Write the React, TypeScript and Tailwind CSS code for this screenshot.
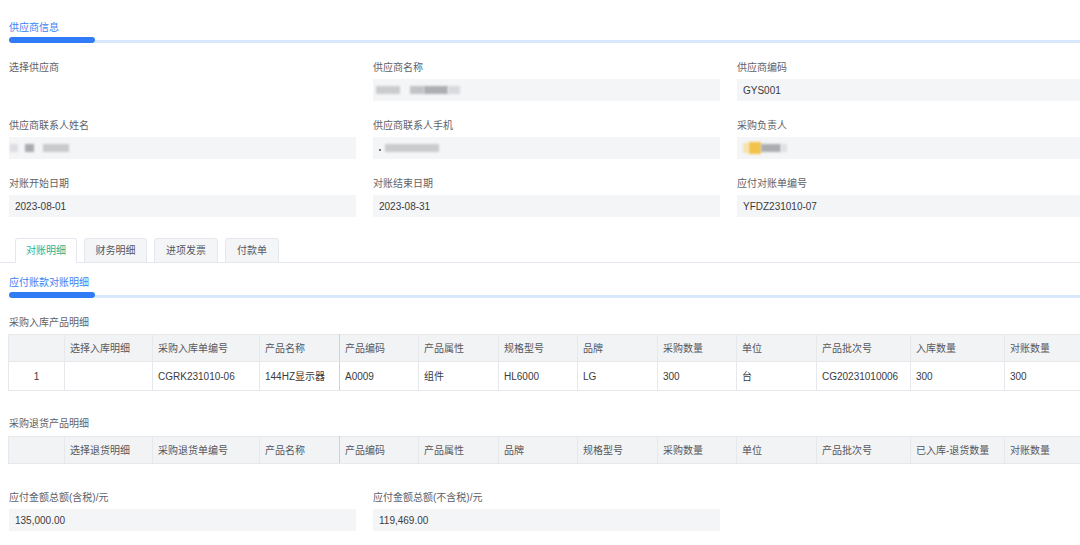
import React from "react";

const FONT = { fontFamily: '"Liberation Sans", "Noto Sans CJK SC", sans-serif' };

function SectionTitle({ title }: { title: string }) {
  return (
    <div className="pl-[9px]">
      <div className="h-[14px] leading-[14px] text-[10px] text-[#3b82f6] pt-px">{title}</div>
      <div className="mt-[3px] flex items-end">
        <div className="w-[86px] h-[6px] rounded-full bg-[#2f7cf6]" />
        <div className="flex-1 h-[3px] bg-[#d9e7fc]" />
      </div>
    </div>
  );
}

function Blur({ w, ml = 0, c, h = 8 }: { w: number; ml?: number; c: string; h?: number }) {
  return (
    <div
      className="blur-[1px] shrink-0"
      style={{ width: w, marginLeft: ml, height: h, background: c }}
    />
  );
}

function Field({ label, value, children }: { label: string; value?: string; children?: React.ReactNode }) {
  return (
    <div>
      <div className="h-[14px] leading-[14px] text-[10px] text-[#5f6166]">{label}</div>
      <div className="mt-[4px] h-[22px] bg-[#f4f5f7] flex items-center px-[6px] text-[10px] text-[#3a3b3e]">
        {value}
        {children}
      </div>
    </div>
  );
}

const widths = [56, 88, 107, 80, 79, 80, 79, 80, 79, 80, 94, 94, 94];

function Table({ headers, rows }: { headers: string[]; rows: string[][] }) {
  return (
    <table className="ml-[8px] table-fixed border-collapse text-[10px]" style={{ width: 1090 }}>
      <colgroup>
        {widths.map((w, i) => (
          <col key={i} style={{ width: w }} />
        ))}
      </colgroup>
      <thead>
        <tr className="h-[27px] bg-[#f2f3f5]">
          {headers.map((h, i) => (
            <th
              key={i}
              className={`font-normal text-left pl-[5px] text-[#55575c] border border-[#e6e8eb] ${i === 3 ? "border-r-[#cfd1d4]" : ""}`}
            >
              {h}
            </th>
          ))}
        </tr>
      </thead>
      <tbody>
        {rows.map((r, ri) => (
          <tr key={ri} className="h-[29px] bg-white">
            {r.map((c, i) => (
              <td
                key={i}
                className={`text-[#3a3b3e] border border-[#e6e8eb] ${i === 0 ? "text-center" : "pl-[5px]"} ${i === 3 ? "border-r-[#cfd1d4]" : ""}`}
              >
                {c}
              </td>
            ))}
          </tr>
        ))}
      </tbody>
    </table>
  );
}

export default function App() {
  const tabs = [
    { t: "对账明细", w: 62 },
    { t: "财务明细", w: 63 },
    { t: "进项发票", w: 64 },
    { t: "付款单", w: 54 },
  ];
  return (
    <div className="w-[1080px] h-[545px] overflow-hidden bg-white" style={FONT}>
      <div className="pt-[20px]">
        <SectionTitle title="供应商信息" />
      </div>

      <div className="mt-[18px] pl-[9px] grid grid-cols-[347px_347px_347px] gap-x-[17px] gap-y-[18px] w-[1120px]">
        <div>
          <div className="h-[14px] leading-[14px] text-[10px] text-[#5f6166]">选择供应商</div>
        </div>
        <Field label="供应商名称">
          <div className="flex items-center -ml-[3px]">
            <Blur w={24} c="#cbccce" />
            <Blur w={14} ml={10} c="#c2c3c5" />
            <Blur w={24} c="#adaeb1" />
            <Blur w={12} c="#d8d9dc" />
          </div>
        </Field>
        <Field label="供应商编码" value="GYS001" />

        <Field label="供应商联系人姓名">
          <div className="flex items-center -ml-[5px]">
            <Blur w={8} c="#dcdde0" />
            <Blur w={9} ml={7} c="#a9aaad" />
            <Blur w={26} ml={9} c="#c9cacc" />
          </div>
        </Field>
        <Field label="供应商联系人手机">
          <div className="flex items-center">
            <div className="w-[2px] h-[2px] bg-[#777] mt-[4px]" />
            <Blur w={54} ml={4} c="#cacbcd" />
          </div>
        </Field>
        <Field label="采购负责人">
          <div className="flex items-center">
            <Blur w={6} c="#f7e2b0" h={10} />
            <Blur w={12} c="#f3c24a" h={12} />
            <Blur w={20} c="#acadb0" />
            <Blur w={6} c="#e0e1e3" />
          </div>
        </Field>

        <Field label="对账开始日期" value="2023-08-01" />
        <Field label="对账结束日期" value="2023-08-31" />
        <Field label="应付对账单编号" value="YFDZ231010-07" />
      </div>

      <div className="mt-[20px] border-b border-[#e4e7ed] pl-[15px] flex gap-[7px] h-[26px] items-end">
        {tabs.map((tab, i) => (
          <div
            key={tab.t}
            style={{ width: tab.w }}
            className={`h-[25px] -mb-px flex items-center justify-center text-[10px] rounded-t-[3px] border ${
              i === 0
                ? "bg-white border-[#e4e7ed] border-b-white text-[#2bb08a]"
                : "bg-[#f4f5f7] border-[#e4e7ed] text-[#55575c]"
            }`}
          >
            {tab.t}
          </div>
        ))}
      </div>

      <div className="mt-[12px]">
        <SectionTitle title="应付账款对账明细" />
      </div>

      <div className="mt-[18px] pl-[9px] h-[14px] leading-[14px] text-[10px] text-[#5f6166]">采购入库产品明细</div>
      <div className="mt-[4px]">
        <Table
          headers={["", "选择入库明细", "采购入库单编号", "产品名称", "产品编码", "产品属性", "规格型号", "品牌", "采购数量", "单位", "产品批次号", "入库数量", "对账数量"]}
          rows={[["1", "", "CGRK231010-06", "144HZ显示器", "A0009", "组件", "HL6000", "LG", "300", "台", "CG20231010006", "300", "300"]]}
        />
      </div>

      <div className="mt-[26px] pl-[9px] h-[14px] leading-[14px] text-[10px] text-[#5f6166]">采购退货产品明细</div>
      <div className="mt-[5px]">
        <Table
          headers={["", "选择退货明细", "采购退货单编号", "产品名称", "产品编码", "产品属性", "品牌", "规格型号", "采购数量", "单位", "产品批次号", "已入库-退货数量", "对账数量"]}
          rows={[]}
        />
      </div>

      <div className="mt-[27px] pl-[9px] grid grid-cols-[347px_347px] gap-x-[17px]">
        <Field label="应付金额总额(含税)/元" value="135,000.00" />
        <Field label="应付金额总额(不含税)/元" value="119,469.00" />
      </div>
    </div>
  );
}
